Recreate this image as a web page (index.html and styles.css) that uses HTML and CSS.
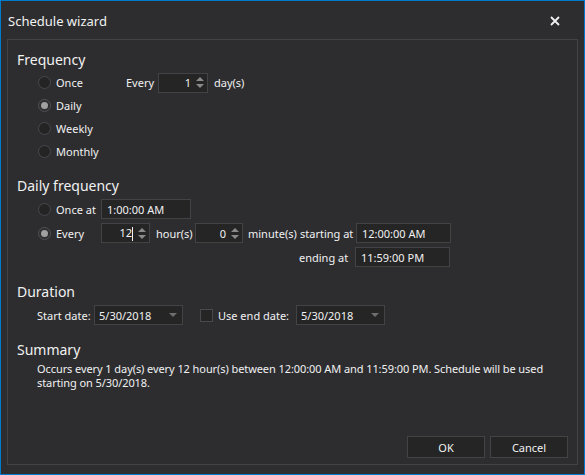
FILE: index.html
```html
<!DOCTYPE html>
<html>
<head>
<meta charset="utf-8">
<link rel="stylesheet" href="styles.css">
</head>
<body>
<div class="window">
  <div class="titlebar">
    <span class="title">Schedule wizard</span>
    <svg class="close" width="10" height="10" viewBox="0 0 10 10"><path d="M1 1 L9 9 M9 1 L1 9" stroke="#f1f1f1" stroke-width="1.8"/></svg>
  </div>
  <div class="panel">
    <div class="section-title">Frequency</div>
    <div class="freq">
      <div class="freq-radios">
        <div class="row"><span class="radio"></span><span class="lbl">Once</span></div>
        <div class="row"><span class="radio checked"></span><span class="lbl">Daily</span></div>
        <div class="row"><span class="radio"></span><span class="lbl">Weekly</span></div>
        <div class="row"><span class="radio"></span><span class="lbl">Monthly</span></div>
      </div>
      <div class="row every-days">
        <span class="lbl w-every">Every</span>
        <span class="spin w-days"><span class="val">1</span><span class="arrows"><span class="up"></span><span class="down"></span></span></span>
        <span class="lbl after">day(s)</span>
      </div>
    </div>

    <div class="section-title gap">Daily frequency</div>
    <div class="row r24">
      <span class="radio-col"><span class="radio"></span><span class="lbl">Once at</span></span>
      <span class="box w-once">1:00:00 AM</span>
    </div>
    <div class="row r24">
      <span class="radio-col"><span class="radio checked"></span><span class="lbl">Every</span></span>
      <span class="spin w-hours"><span class="val">12<span class="caret"></span></span><span class="arrows"><span class="up"></span><span class="down"></span></span></span>
      <span class="lbl after w-hourlbl">hour(s)</span>
      <span class="spin w-min"><span class="val">0</span><span class="arrows"><span class="up"></span><span class="down"></span></span></span>
      <span class="lbl w-minlbl">minute(s)</span>
      <span class="lbl w-at">starting at</span>
      <span class="box w-time">12:00:00 AM</span>
    </div>
    <div class="row r24">
      <span class="lbl w-at ending">ending at</span>
      <span class="box w-time">11:59:00 PM</span>
    </div>

    <div class="section-title gap">Duration</div>
    <div class="row r24 duration">
      <span class="lbl w-start">Start date:</span>
      <span class="combo"><span>5/30/2018</span><span class="tri"></span></span>
      <span class="check"></span>
      <span class="lbl w-use">Use end date:</span>
      <span class="combo"><span>5/30/2018</span><span class="tri"></span></span>
    </div>

    <div class="section-title gap">Summary</div>
    <div class="summary">Occurs every 1 day(s) every 12 hour(s) between 12:00:00 AM and 11:59:00 PM. Schedule will be used<br>starting on 5/30/2018.</div>

    <div class="buttons">
      <button class="btn">OK</button>
      <button class="btn">Cancel</button>
    </div>
  </div>
</div>
</body>
</html>
```

FILE: styles.css
```css
* { box-sizing: border-box; }
html, body {
  margin: 0;
  padding: 0;
  background: #2d2d30;
}
body {
  font-family: "Noto Sans", "Open Sans", sans-serif;
  font-size: 11px;
  color: #f1f1f1;
}
.window {
  width: 585px;
  height: 475px;
  border: 1px solid #007acc;
  background: #2d2d30;
  display: flex;
  flex-direction: column;
}
.titlebar {
  height: 38px;
  flex: none;
  display: flex;
  align-items: center;
  justify-content: space-between;
  padding: 0 24px 0 7px;
}
.title {
  font-size: 13px;
  color: #f1f1f1;
  margin-top: 2px;
}
.close { margin-top: 2px; }
.panel {
  flex: 1;
  margin: 0 6px 9px 6px;
  border: 1px solid #434346;
  display: flex;
  flex-direction: column;
  padding: 10px 9px 6px 9px;
}
.section-title {
  font-size: 14px;
  height: 21px;
  line-height: 20px;
}
.section-title.gap { margin-top: 13px; }
.row {
  display: flex;
  align-items: center;
  height: 23px;
}
.r24 { height: 24px; padding-left: 21px; }
.freq { display: flex; padding-left: 21px; }
.freq-radios { width: 88px; flex: none; }
.every-days { align-self: flex-start; }
.radio {
  width: 13px;
  height: 13px;
  border-radius: 50%;
  border: 1px solid #48484d;
  background: #242425;
  margin-right: 5px;
  display: inline-flex;
  align-items: center;
  justify-content: center;
  flex: none;
}
.radio.checked { border-color: #505055; background: #2e2e31; }
.radio.checked::after {
  content: "";
  width: 7px;
  height: 7px;
  border-radius: 50%;
  background: #a0a0a0;
}
.lbl { white-space: nowrap; }
.radio-col { display: flex; align-items: center; width: 63px; flex: none; }
.w-every { width: 32px; flex: none; }
.spin, .box, .combo {
  height: 20px;
  background: #252526;
  border: 1px solid #434346;
  display: flex;
  align-items: center;
  flex: none;
}
.spin { justify-content: flex-end; padding-right: 2px; }
.spin .val { padding-right: 3px; }
.caret {
  display: inline-block;
  width: 1px;
  height: 14px;
  background: #f1f1f1;
  vertical-align: middle;
}
.arrows {
  display: flex;
  flex-direction: column;
  align-items: center;
  justify-content: center;
  width: 11px;
  gap: 3px;
}
.up, .down {
  width: 0;
  height: 0;
  border-left: 4px solid transparent;
  border-right: 4px solid transparent;
}
.up { border-bottom: 4px solid #8a8a8a; }
.down { border-top: 4px solid #8a8a8a; }
.w-days { width: 50px; }
.after { margin-left: 6px; }
.w-once { width: 90px; padding-left: 5px; }
.w-hours { width: 49px; }
.w-hourlbl { width: 39px; flex: none; }
.w-min { width: 48px; }
.w-minlbl { width: 57px; flex: none; padding-left: 5px; }
.w-at { width: 56px; flex: none; }
.ending { margin-left: 261px; }
.w-time { width: 95px; padding-left: 5px; }
.duration .w-start { width: 57px; margin-left: -1px; flex: none; }
.combo {
  width: 89px;
  padding: 0 5px 0 4px;
  justify-content: space-between;
}
.tri {
  width: 0;
  height: 0;
  border-left: 4px solid transparent;
  border-right: 4px solid transparent;
  border-top: 4px solid #6e6e6e;
}
.check {
  width: 13px;
  height: 13px;
  border: 1px solid #48484d;
  background: #252526;
  margin: 0 5px 0 17px;
  flex: none;
}
.w-use { width: 78px; flex: none; }
.summary {
  padding-left: 20px;
  margin-top: 1px;
  line-height: 13.5px;
  letter-spacing: -0.08px;
  white-space: nowrap;
}
.buttons {
  margin-top: auto;
  display: flex;
  justify-content: flex-end;
  gap: 5px;
}
.btn {
  width: 78px;
  height: 22px;
  background: #252526;
  border: 1px solid #434346;
  color: #f1f1f1;
  font-family: "Noto Sans", "Open Sans", sans-serif;
  font-size: 11px;
  padding: 0;
}
```
